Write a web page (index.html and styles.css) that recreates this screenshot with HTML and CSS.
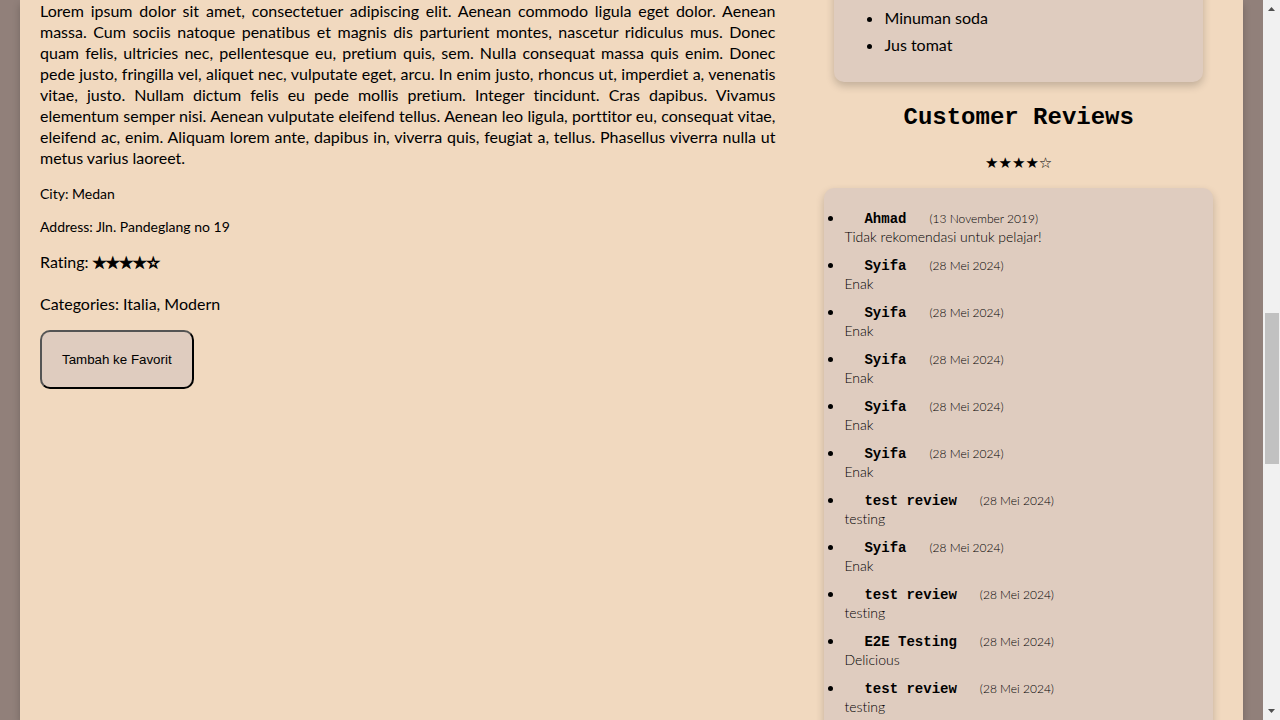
FILE: index.html
```html
<!DOCTYPE html>
<html lang="en">
<head>
<meta charset="utf-8">
<title>Restaurant Detail</title>
<link rel="stylesheet" href="styles.css">
</head>
<body>
<div class="viewport">
  <main class="page">
    <section class="info">
      <p class="description">Lorem ipsum dolor sit amet, consectetuer adipiscing elit. Aenean commodo ligula eget dolor. Aenean massa. Cum sociis natoque penatibus et magnis dis parturient montes, nascetur ridiculus mus. Donec quam felis, ultricies nec, pellentesque eu, pretium quis, sem. Nulla consequat massa quis enim. Donec pede justo, fringilla vel, aliquet nec, vulputate eget, arcu. In enim justo, rhoncus ut, imperdiet a, venenatis vitae, justo. Nullam dictum felis eu pede mollis pretium. Integer tincidunt. Cras dapibus. Vivamus elementum semper nisi. Aenean vulputate eleifend tellus. Aenean leo ligula, porttitor eu, consequat vitae, eleifend ac, enim. Aliquam lorem ante, dapibus in, viverra quis, feugiat a, tellus. Phasellus viverra nulla ut metus varius laoreet.</p>
      <p class="place">City: Medan</p>
      <p class="place">Address: Jln. Pandeglang no 19</p>
      <p class="fact">Rating: <span class="stars stars-bold">★★★★☆</span></p>
      <p class="fact">Categories: Italia, Modern</p>
      <button class="favorite" type="button">Tambah ke Favorit</button>
    </section>
    <aside class="side">
      <div class="menu">
        <ul class="menu-list">
          <li>Kopi espresso</li>
          <li>Minuman soda</li>
          <li>Jus tomat</li>
        </ul>
      </div>
      <h2 class="heading">Customer Reviews</h2>
      <p class="average stars">★★★★☆</p>
      <ul class="reviews">
        <li><span class="name">Ahmad</span><span class="date">(13 November 2019)</span><p class="text">Tidak rekomendasi untuk pelajar!</p></li>
        <li><span class="name">Syifa</span><span class="date">(28 Mei 2024)</span><p class="text">Enak</p></li>
        <li><span class="name">Syifa</span><span class="date">(28 Mei 2024)</span><p class="text">Enak</p></li>
        <li><span class="name">Syifa</span><span class="date">(28 Mei 2024)</span><p class="text">Enak</p></li>
        <li><span class="name">Syifa</span><span class="date">(28 Mei 2024)</span><p class="text">Enak</p></li>
        <li><span class="name">Syifa</span><span class="date">(28 Mei 2024)</span><p class="text">Enak</p></li>
        <li><span class="name">test review</span><span class="date">(28 Mei 2024)</span><p class="text">testing</p></li>
        <li><span class="name">Syifa</span><span class="date">(28 Mei 2024)</span><p class="text">Enak</p></li>
        <li><span class="name">test review</span><span class="date">(28 Mei 2024)</span><p class="text">testing</p></li>
        <li><span class="name">E2E Testing</span><span class="date">(28 Mei 2024)</span><p class="text">Delicious</p></li>
        <li><span class="name">test review</span><span class="date">(28 Mei 2024)</span><p class="text">testing</p></li>
      </ul>
    </aside>
  </main>
  <div class="scrollbar" aria-hidden="true">
    <svg class="arrow" viewBox="0 0 17 17"><path d="M5 11h7L8.500 7z"/></svg>
    <div class="track"><div class="thumb"></div></div>
    <svg class="arrow" viewBox="0 0 17 17"><path d="M5 6h7L8.500 10z"/></svg>
  </div>
</div>
</body>
</html>
```
FILE: styles.css
```css
* {
  box-sizing: border-box;
}

body {
  margin: 0;
  background: #91807a;
  color: #000;
  font-family: Lato, "Open Sans", sans-serif;
  font-weight: 400;
  font-size: 16px;
  line-height: 21px;
  font-variant-ligatures: none;
}

p,
ul,
h2 {
  margin: 0;
  padding: 0;
}

.viewport {
  display: flex;
  height: 100vh;
  overflow: hidden;
}

.page {
  flex: 1;
  display: grid;
  grid-template-columns: 9fr 5fr;
  gap: 39px;
  margin: 0 20px;
  padding: 0 20px;
  background: #f1d9bf;
  box-shadow: 0 4px 8px rgba(0, 0, 0, 0.2);
}

.info {
  display: flex;
  flex-direction: column;
  align-items: flex-start;
}

.description {
  margin-bottom: 16px;
  text-align: justify;
}

.place {
  margin-bottom: 14px;
  font-size: 14px;
  line-height: 19px;
}

.fact {
  margin: 1px 0 18px;
}

.stars {
  font-family: "DejaVu Sans", sans-serif;
  font-size: 15px;
}

.stars-bold {
  -webkit-text-stroke: 1px #000;
}

.favorite {
  margin-top: -2px;
  padding: 20px;
  border: 2px outset #000;
  border-radius: 10px;
  background: #dfccbf;
  color: #000;
  font-family: "Liberation Sans", Arial, sans-serif;
}

.side {
  display: flex;
  flex-direction: column;
  padding: 0 10px;
}

.menu {
  margin: -23px 10px 0;
  padding: 0 20px 24px;
  border-radius: 10px;
  background: #dfccbf;
  box-shadow: 0 4px 8px rgba(0, 0, 0, 0.2);
}

.menu-list {
  padding-left: 30px;
  line-height: 27px;
}

.heading {
  margin-top: 20px;
  font: 700 24px/32px "Liberation Mono", monospace;
  text-align: center;
}

.average {
  margin: 19px 0 14px;
  text-align: center;
}

.reviews {
  flex: 1;
  padding: 20px;
  border-radius: 10px;
  background: #dfccbf;
  box-shadow: 0 4px 8px rgba(0, 0, 0, 0.2);
  font-weight: 300;
  font-size: 14px;
  line-height: 19px;
}

.reviews li {
  margin-bottom: 9px;
}

.name {
  margin: 0 23px 0 20px;
  font: 700 14px/15px "Liberation Mono", monospace;
}

.date {
  font-size: 12px;
  line-height: 15px;
}

.scrollbar {
  display: flex;
  flex-direction: column;
  width: 17px;
  background: #f1f1f1;
}

.arrow {
  height: 17px;
  fill: #505050;
}

.track {
  flex: 1;
  padding: 296px 1px 0 2px;
}

.thumb {
  height: 151px;
  background: #c1c1c1;
}
```
